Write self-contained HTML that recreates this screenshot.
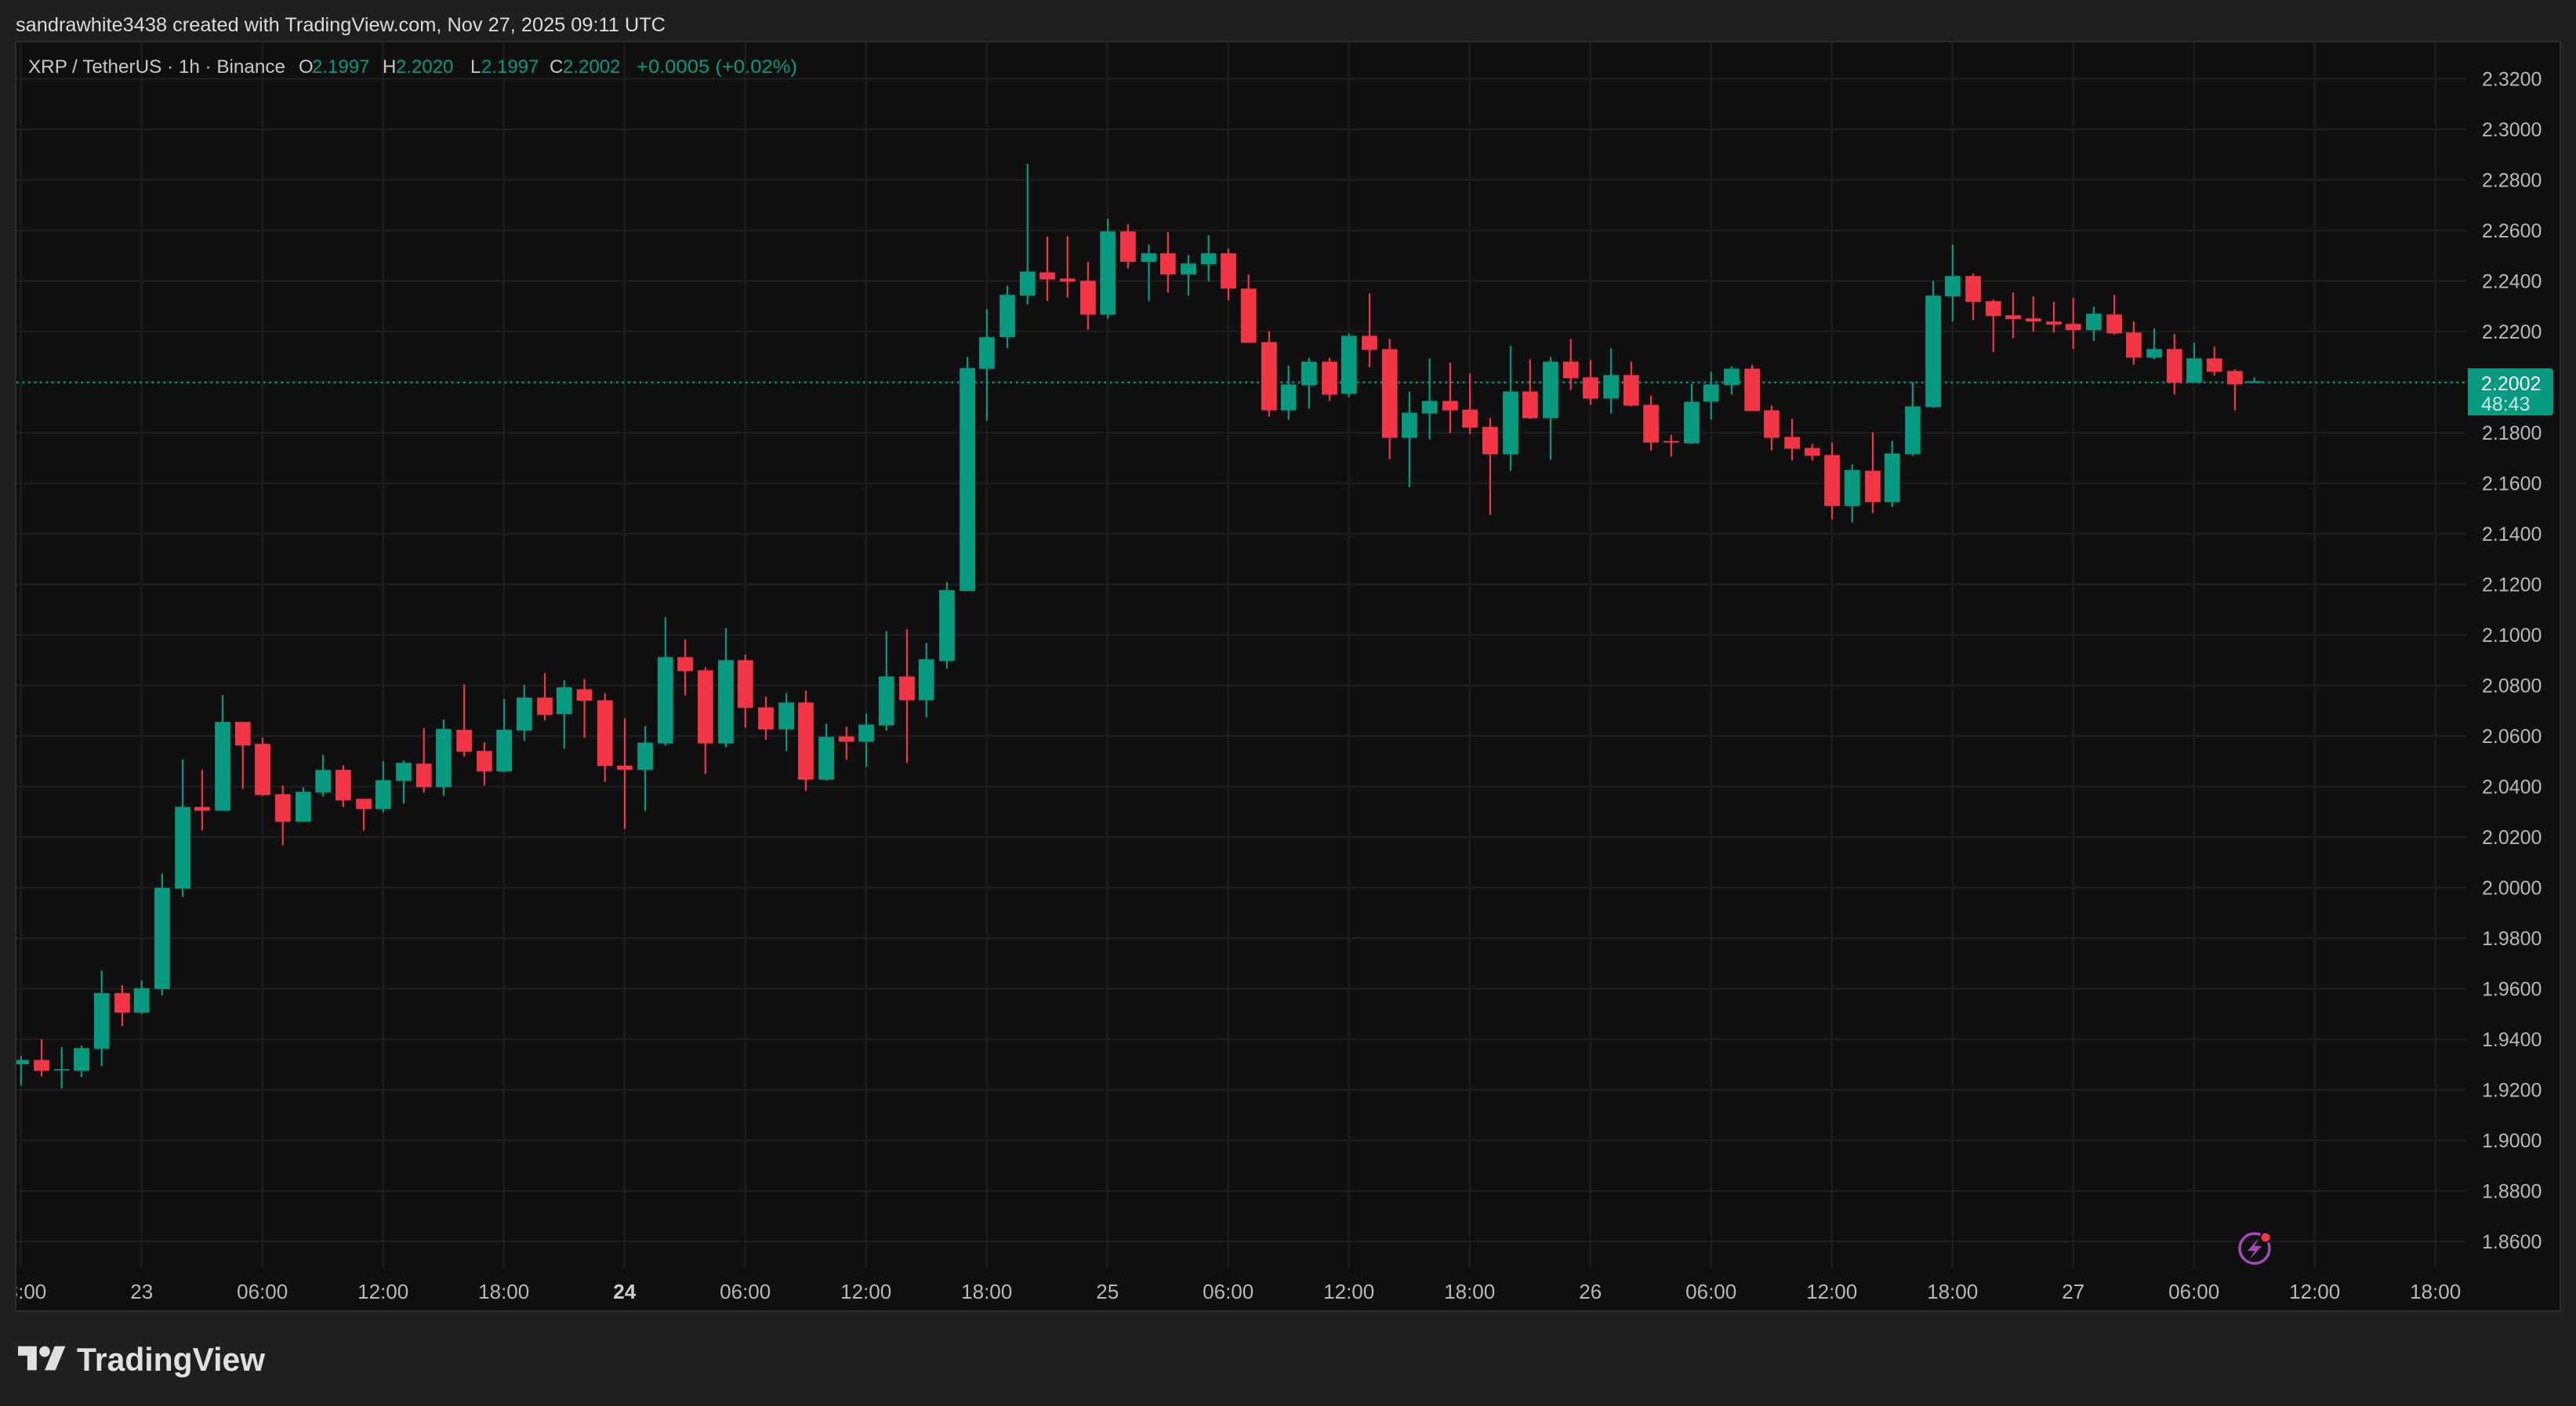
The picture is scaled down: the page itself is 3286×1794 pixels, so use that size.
<!DOCTYPE html>
<html><head><meta charset="utf-8"><style>
html,body{margin:0;padding:0;background:#1f1f1f;}
svg{display:block;}
.g{fill:#089981}.r{fill:#f23645}
text{font-family:"Liberation Sans",sans-serif;}
</style></head><body>
<svg width="3286" height="1794" viewBox="0 0 3286 1794" xmlns="http://www.w3.org/2000/svg">
<defs><clipPath id="pane"><rect x="21" y="54" width="3244" height="1618"/></clipPath></defs>
<rect x="0" y="0" width="3286" height="1794" fill="#1f1f1f"/>
<rect x="20" y="53" width="3246" height="1620" fill="#0f0f0f" stroke="#2c2c2c" stroke-width="2"/>
<g stroke="#1f1f1f" stroke-width="2">
<line x1="21" x2="3146" y1="100.6" y2="100.6"/><line x1="21" x2="3146" y1="165.1" y2="165.1"/><line x1="21" x2="3146" y1="229.6" y2="229.6"/><line x1="21" x2="3146" y1="294.1" y2="294.1"/><line x1="21" x2="3146" y1="358.6" y2="358.6"/><line x1="21" x2="3146" y1="423.1" y2="423.1"/><line x1="21" x2="3146" y1="487.6" y2="487.6"/><line x1="21" x2="3146" y1="552.1" y2="552.1"/><line x1="21" x2="3146" y1="616.6" y2="616.6"/><line x1="21" x2="3146" y1="681.1" y2="681.1"/><line x1="21" x2="3146" y1="745.6" y2="745.6"/><line x1="21" x2="3146" y1="810.1" y2="810.1"/><line x1="21" x2="3146" y1="874.6" y2="874.6"/><line x1="21" x2="3146" y1="939.1" y2="939.1"/><line x1="21" x2="3146" y1="1003.6" y2="1003.6"/><line x1="21" x2="3146" y1="1068.1" y2="1068.1"/><line x1="21" x2="3146" y1="1132.6" y2="1132.6"/><line x1="21" x2="3146" y1="1197.1" y2="1197.1"/><line x1="21" x2="3146" y1="1261.6" y2="1261.6"/><line x1="21" x2="3146" y1="1326.1" y2="1326.1"/><line x1="21" x2="3146" y1="1390.6" y2="1390.6"/><line x1="21" x2="3146" y1="1455.1" y2="1455.1"/><line x1="21" x2="3146" y1="1519.6" y2="1519.6"/><line x1="21" x2="3146" y1="1584.1" y2="1584.1"/>
</g>
<g stroke="#1f1f1f" stroke-width="2">
<line y1="54" y2="1618" x1="26.7" x2="26.7"/><line y1="54" y2="1618" x1="180.7" x2="180.7"/><line y1="54" y2="1618" x1="334.7" x2="334.7"/><line y1="54" y2="1618" x1="488.7" x2="488.7"/><line y1="54" y2="1618" x1="642.7" x2="642.7"/><line y1="54" y2="1618" x1="796.7" x2="796.7"/><line y1="54" y2="1618" x1="950.7" x2="950.7"/><line y1="54" y2="1618" x1="1104.7" x2="1104.7"/><line y1="54" y2="1618" x1="1258.7" x2="1258.7"/><line y1="54" y2="1618" x1="1412.7" x2="1412.7"/><line y1="54" y2="1618" x1="1566.7" x2="1566.7"/><line y1="54" y2="1618" x1="1720.7" x2="1720.7"/><line y1="54" y2="1618" x1="1874.7" x2="1874.7"/><line y1="54" y2="1618" x1="2028.7" x2="2028.7"/><line y1="54" y2="1618" x1="2182.7" x2="2182.7"/><line y1="54" y2="1618" x1="2336.7" x2="2336.7"/><line y1="54" y2="1618" x1="2490.7" x2="2490.7"/><line y1="54" y2="1618" x1="2644.7" x2="2644.7"/><line y1="54" y2="1618" x1="2798.7" x2="2798.7"/><line y1="54" y2="1618" x1="2952.7" x2="2952.7"/><line y1="54" y2="1618" x1="3106.7" x2="3106.7"/>
</g>
<line x1="21" x2="3148" y1="488" y2="488" stroke="#089981" stroke-width="2.5" stroke-dasharray="2.5 5"/>
<g clip-path="url(#pane)">
<g transform="translate(20,858) scale(0.4592,0.3453)">
<rect class="g" x="12.6" y="1417" width="4.8" height="110"/><rect class="g" x="-6.5" y="1432" width="43" height="16"/>
<rect class="r" x="69.6" y="1356" width="4.8" height="137"/><rect class="r" x="50.5" y="1432" width="43" height="40"/>
<rect class="g" x="125.6" y="1385" width="4.8" height="153"/><rect class="g" x="106.5" y="1466" width="43" height="5"/>
<rect class="g" x="180.6" y="1379" width="4.8" height="116"/><rect class="g" x="161.5" y="1388" width="43" height="84"/>
<rect class="g" x="236.6" y="1101" width="4.8" height="354"/><rect class="g" x="217.5" y="1185" width="43" height="206"/>
<rect class="r" x="293.6" y="1156" width="4.8" height="151"/><rect class="r" x="274.5" y="1185" width="43" height="72"/>
<rect class="g" x="347.6" y="1138" width="4.8" height="125"/><rect class="g" x="328.5" y="1167" width="43" height="90"/>
<rect class="g" x="404.6" y="743" width="4.8" height="450"/><rect class="g" x="385.5" y="796" width="43" height="374"/>
<rect class="g" x="461.6" y="322" width="4.8" height="508"/><rect class="g" x="442.5" y="497" width="43" height="302"/>
<rect class="r" x="515.6" y="360" width="4.8" height="224"/><rect class="r" x="496.5" y="497" width="43" height="14"/>
<rect class="g" x="572.6" y="84" width="4.8" height="427"/><rect class="g" x="553.5" y="183" width="43" height="328"/>
<rect class="r" x="628.6" y="183" width="4.8" height="247"/><rect class="r" x="609.5" y="183" width="43" height="87"/>
<rect class="r" x="683.6" y="241" width="4.8" height="215"/><rect class="r" x="664.5" y="264" width="43" height="189"/>
<rect class="r" x="739.6" y="418" width="4.8" height="221"/><rect class="r" x="720.5" y="450" width="43" height="102"/>
<rect class="g" x="796.6" y="424" width="4.8" height="128"/><rect class="g" x="777.5" y="441" width="43" height="111"/>
<rect class="g" x="851.6" y="305" width="4.8" height="154"/><rect class="g" x="832.5" y="360" width="43" height="84"/>
<rect class="r" x="907.6" y="343" width="4.8" height="154"/><rect class="r" x="888.5" y="360" width="43" height="113"/>
<rect class="r" x="964.6" y="467" width="4.8" height="117"/><rect class="r" x="945.5" y="467" width="43" height="38"/>
<rect class="g" x="1018.6" y="328" width="4.8" height="189"/><rect class="g" x="999.5" y="398" width="43" height="107"/>
<rect class="g" x="1075.6" y="325" width="4.8" height="160"/><rect class="g" x="1056.5" y="334" width="43" height="67"/>
<rect class="r" x="1131.6" y="206" width="4.8" height="238"/><rect class="r" x="1112.5" y="337" width="43" height="87"/>
<rect class="g" x="1186.6" y="174" width="4.8" height="282"/><rect class="g" x="1167.5" y="209" width="43" height="215"/>
<rect class="r" x="1243.6" y="44" width="4.8" height="267"/><rect class="r" x="1224.5" y="212" width="43" height="81"/>
<rect class="r" x="1299.6" y="258" width="4.8" height="160"/><rect class="r" x="1280.5" y="290" width="43" height="76"/>
<rect class="g" x="1354.6" y="99" width="4.8" height="270"/><rect class="g" x="1335.5" y="212" width="43" height="154"/>
<rect class="g" x="1410.6" y="46" width="4.8" height="207"/><rect class="g" x="1391.5" y="93" width="43" height="122"/>
<rect class="r" x="1467.6" y="3" width="4.8" height="174"/><rect class="r" x="1448.5" y="93" width="43" height="64"/>
<rect class="g" x="1521.6" y="29" width="4.8" height="253"/><rect class="g" x="1502.5" y="55" width="43" height="99"/>
</g>
<g transform="translate(740,189) scale(0.4592,0.5623)">
<rect class="r" x="9.6" y="1205" width="4.8" height="133"/><rect class="r" x="-9.5" y="1228" width="43" height="26"/>
<rect class="r" x="66.6" y="1237" width="4.8" height="201"/><rect class="r" x="47.5" y="1253" width="43" height="149"/>
<rect class="r" x="121.6" y="1294" width="4.8" height="251"/><rect class="r" x="102.5" y="1401" width="43" height="10"/>
<rect class="g" x="178.6" y="1311" width="4.8" height="193"/><rect class="g" x="159.5" y="1349" width="43" height="62"/>
<rect class="g" x="234.6" y="1064" width="4.8" height="292"/><rect class="g" x="215.5" y="1155" width="43" height="196"/>
<rect class="r" x="289.6" y="1115" width="4.8" height="127"/><rect class="r" x="270.5" y="1155" width="43" height="32"/>
<rect class="r" x="345.6" y="1178" width="4.8" height="242"/><rect class="r" x="326.5" y="1185" width="43" height="166"/>
<rect class="g" x="402.6" y="1089" width="4.8" height="271"/><rect class="g" x="383.5" y="1162" width="43" height="189"/>
<rect class="r" x="456.6" y="1149" width="4.8" height="166"/><rect class="r" x="437.5" y="1162" width="43" height="108"/>
<rect class="r" x="513.6" y="1245" width="4.8" height="98"/><rect class="r" x="494.5" y="1269" width="43" height="50"/>
<rect class="g" x="570.6" y="1237" width="4.8" height="131"/><rect class="g" x="551.5" y="1258" width="43" height="61"/>
<rect class="r" x="624.6" y="1231" width="4.8" height="228"/><rect class="r" x="605.5" y="1258" width="43" height="175"/>
<rect class="g" x="681.6" y="1306" width="4.8" height="129"/><rect class="g" x="662.5" y="1336" width="43" height="97"/>
<rect class="r" x="737.6" y="1313" width="4.8" height="75"/><rect class="r" x="718.5" y="1335" width="43" height="12"/>
<rect class="g" x="792.6" y="1283" width="4.8" height="121"/><rect class="g" x="773.5" y="1308" width="43" height="39"/>
<rect class="g" x="848.6" y="1096" width="4.8" height="226"/><rect class="g" x="829.5" y="1199" width="43" height="111"/>
<rect class="r" x="905.6" y="1092" width="4.8" height="303"/><rect class="r" x="886.5" y="1199" width="43" height="54"/>
<rect class="g" x="959.6" y="1123" width="4.8" height="169"/><rect class="g" x="940.5" y="1160" width="43" height="93"/>
<rect class="g" x="1016.6" y="985" width="4.8" height="196"/><rect class="g" x="997.5" y="1003" width="43" height="161"/>
<rect class="g" x="1073.6" y="474" width="4.8" height="531"/><rect class="g" x="1054.5" y="499" width="43" height="506"/>
<rect class="g" x="1127.6" y="365" width="4.8" height="253"/><rect class="g" x="1108.5" y="429" width="43" height="72"/>
<rect class="g" x="1184.6" y="312" width="4.8" height="142"/><rect class="g" x="1165.5" y="333" width="43" height="96"/>
<rect class="g" x="1240.6" y="36" width="4.8" height="319"/><rect class="g" x="1221.5" y="280" width="43" height="55"/>
<rect class="r" x="1295.6" y="201" width="4.8" height="146"/><rect class="r" x="1276.5" y="282" width="43" height="16"/>
<rect class="r" x="1351.6" y="200" width="4.8" height="139"/><rect class="r" x="1332.5" y="296" width="43" height="7"/>
<rect class="r" x="1408.6" y="258" width="4.8" height="154"/><rect class="r" x="1389.5" y="301" width="43" height="77"/>
<rect class="g" x="1463.6" y="160" width="4.8" height="227"/><rect class="g" x="1444.5" y="189" width="43" height="189"/>
<rect class="r" x="1519.6" y="173" width="4.8" height="100"/><rect class="r" x="1500.5" y="189" width="43" height="69"/>
</g>
<g transform="translate(1460,219) scale(0.4592,0.334)">
<rect class="g" x="9.6" y="279" width="4.8" height="216"/><rect class="g" x="-9.5" y="312" width="43" height="33"/>
<rect class="r" x="62.6" y="231" width="4.8" height="231"/><rect class="r" x="43.5" y="312" width="43" height="81"/>
<rect class="g" x="119.6" y="318" width="4.8" height="156"/><rect class="g" x="100.5" y="351" width="43" height="42"/>
<rect class="g" x="175.6" y="243" width="4.8" height="177"/><rect class="g" x="156.5" y="312" width="43" height="42"/>
<rect class="r" x="230.6" y="294" width="4.8" height="198"/><rect class="r" x="211.5" y="312" width="43" height="135"/>
<rect class="r" x="286.6" y="393" width="4.8" height="261"/><rect class="r" x="267.5" y="447" width="43" height="207"/>
<rect class="r" x="343.6" y="609" width="4.8" height="327"/><rect class="r" x="324.5" y="651" width="43" height="261"/>
<rect class="g" x="397.6" y="741" width="4.8" height="207"/><rect class="g" x="378.5" y="813" width="43" height="99"/>
<rect class="g" x="454.6" y="711" width="4.8" height="195"/><rect class="g" x="435.5" y="726" width="43" height="90"/>
<rect class="r" x="511.6" y="711" width="4.8" height="165"/><rect class="r" x="492.5" y="726" width="43" height="126"/>
<rect class="g" x="565.6" y="618" width="4.8" height="243"/><rect class="g" x="546.5" y="627" width="43" height="222"/>
<rect class="r" x="622.6" y="465" width="4.8" height="282"/><rect class="r" x="603.5" y="627" width="43" height="54"/>
<rect class="r" x="678.6" y="639" width="4.8" height="459"/><rect class="r" x="659.5" y="678" width="43" height="339"/>
<rect class="g" x="733.6" y="840" width="4.8" height="366"/><rect class="g" x="714.5" y="921" width="43" height="96"/>
<rect class="g" x="789.6" y="714" width="4.8" height="309"/><rect class="g" x="770.5" y="876" width="43" height="48"/>
<rect class="r" x="846.6" y="729" width="4.8" height="270"/><rect class="r" x="827.5" y="876" width="43" height="36"/>
<rect class="r" x="901.6" y="771" width="4.8" height="231"/><rect class="r" x="882.5" y="909" width="43" height="69"/>
<rect class="r" x="957.6" y="942" width="4.8" height="369"/><rect class="r" x="938.5" y="975" width="43" height="105"/>
<rect class="g" x="1014.6" y="666" width="4.8" height="477"/><rect class="g" x="995.5" y="840" width="43" height="240"/>
<rect class="r" x="1068.6" y="717" width="4.8" height="228"/><rect class="r" x="1049.5" y="840" width="43" height="102"/>
<rect class="g" x="1125.6" y="708" width="4.8" height="393"/><rect class="g" x="1106.5" y="726" width="43" height="216"/>
<rect class="r" x="1181.6" y="639" width="4.8" height="195"/><rect class="r" x="1162.5" y="726" width="43" height="63"/>
<rect class="r" x="1236.6" y="720" width="4.8" height="171"/><rect class="r" x="1217.5" y="786" width="43" height="81"/>
<rect class="g" x="1293.6" y="675" width="4.8" height="249"/><rect class="g" x="1274.5" y="777" width="43" height="90"/>
<rect class="r" x="1349.6" y="726" width="4.8" height="171"/><rect class="r" x="1330.5" y="777" width="43" height="117"/>
<rect class="r" x="1404.6" y="855" width="4.8" height="210"/><rect class="r" x="1385.5" y="891" width="43" height="144"/>
<rect class="r" x="1460.6" y="1005" width="4.8" height="84"/><rect class="r" x="1441.5" y="1029" width="43" height="6"/>
<rect class="g" x="1517.6" y="810" width="4.8" height="231"/><rect class="g" x="1498.5" y="879" width="43" height="159"/>
</g>
<g transform="translate(2180,278) scale(0.4592,0.334)">
<rect class="g" x="3.6" y="588" width="4.8" height="183"/><rect class="g" x="-15.5" y="636" width="43" height="66"/>
<rect class="g" x="60.6" y="567" width="4.8" height="108"/><rect class="g" x="41.5" y="576" width="43" height="63"/>
<rect class="r" x="117.6" y="561" width="4.8" height="177"/><rect class="r" x="98.5" y="576" width="43" height="162"/>
<rect class="r" x="171.6" y="717" width="4.8" height="171"/><rect class="r" x="152.5" y="735" width="43" height="105"/>
<rect class="r" x="228.6" y="768" width="4.8" height="159"/><rect class="r" x="209.5" y="837" width="43" height="45"/>
<rect class="r" x="284.6" y="864" width="4.8" height="63"/><rect class="r" x="265.5" y="879" width="43" height="30"/>
<rect class="r" x="339.6" y="858" width="4.8" height="294"/><rect class="r" x="320.5" y="906" width="43" height="195"/>
<rect class="g" x="395.6" y="942" width="4.8" height="222"/><rect class="g" x="376.5" y="963" width="43" height="138"/>
<rect class="r" x="452.6" y="819" width="4.8" height="309"/><rect class="r" x="433.5" y="966" width="43" height="120"/>
<rect class="g" x="506.6" y="852" width="4.8" height="252"/><rect class="g" x="487.5" y="900" width="43" height="186"/>
<rect class="g" x="563.6" y="627" width="4.8" height="282"/><rect class="g" x="544.5" y="720" width="43" height="183"/>
<rect class="g" x="620.6" y="240" width="4.8" height="486"/><rect class="g" x="601.5" y="297" width="43" height="426"/>
<rect class="g" x="674.6" y="102" width="4.8" height="294"/><rect class="g" x="655.5" y="222" width="43" height="78"/>
<rect class="r" x="731.6" y="213" width="4.8" height="177"/><rect class="r" x="712.5" y="222" width="43" height="99"/>
<rect class="r" x="787.6" y="312" width="4.8" height="201"/><rect class="r" x="768.5" y="318" width="43" height="57"/>
<rect class="r" x="842.6" y="285" width="4.8" height="174"/><rect class="r" x="823.5" y="372" width="43" height="15"/>
<rect class="r" x="898.6" y="300" width="4.8" height="135"/><rect class="r" x="879.5" y="384" width="43" height="12"/>
<rect class="r" x="955.6" y="321" width="4.8" height="117"/><rect class="r" x="936.5" y="396" width="43" height="12"/>
<rect class="r" x="1009.6" y="306" width="4.8" height="195"/><rect class="r" x="990.5" y="405" width="43" height="24"/>
<rect class="g" x="1066.6" y="339" width="4.8" height="132"/><rect class="g" x="1047.5" y="366" width="43" height="63"/>
<rect class="r" x="1123.6" y="294" width="4.8" height="153"/><rect class="r" x="1104.5" y="369" width="43" height="72"/>
<rect class="r" x="1177.6" y="396" width="4.8" height="165"/><rect class="r" x="1158.5" y="438" width="43" height="96"/>
<rect class="g" x="1234.6" y="423" width="4.8" height="117"/><rect class="g" x="1215.5" y="501" width="43" height="33"/>
<rect class="r" x="1290.6" y="444" width="4.8" height="231"/><rect class="r" x="1271.5" y="501" width="43" height="129"/>
<rect class="g" x="1345.6" y="477" width="4.8" height="153"/><rect class="g" x="1326.5" y="537" width="43" height="93"/>
<rect class="r" x="1401.6" y="492" width="4.8" height="111"/><rect class="r" x="1382.5" y="537" width="43" height="51"/>
<rect class="r" x="1458.6" y="579" width="4.8" height="156"/><rect class="r" x="1439.5" y="585" width="43" height="51"/>
<rect class="g" x="1512.6" y="609" width="4.8" height="21"/><rect class="g" x="1493.5" y="624" width="43" height="6"/>
</g>
<g font-size="26" fill="#b8b8b8" text-anchor="middle">
<text x="26.7" y="1657">18:00</text><text x="180.7" y="1657">23</text><text x="334.7" y="1657">06:00</text><text x="488.7" y="1657">12:00</text><text x="642.7" y="1657">18:00</text><text x="796.7" y="1657" font-weight="bold" fill="#cfcfcf">24</text><text x="950.7" y="1657">06:00</text><text x="1104.7" y="1657">12:00</text><text x="1258.7" y="1657">18:00</text><text x="1412.7" y="1657">25</text><text x="1566.7" y="1657">06:00</text><text x="1720.7" y="1657">12:00</text><text x="1874.7" y="1657">18:00</text><text x="2028.7" y="1657">26</text><text x="2182.7" y="1657">06:00</text><text x="2336.7" y="1657">12:00</text><text x="2490.7" y="1657">18:00</text><text x="2644.7" y="1657">27</text><text x="2798.7" y="1657">06:00</text><text x="2952.7" y="1657">12:00</text><text x="3106.7" y="1657">18:00</text>
</g>
<g>
<circle cx="2876" cy="1593" r="19" fill="none" stroke="#ab47bc" stroke-width="3.5"/>
<path d="M2881 1580 L2867 1596 L2876 1596 L2870 1607 L2885 1590 L2876 1590 Z" fill="#ab47bc"/>
<circle cx="2890" cy="1579" r="6.5" fill="#f23645" stroke="#0f0f0f" stroke-width="2"/>
</g>
</g>
<g font-size="25" fill="#b8b8b8">
<text x="3166" y="109.6">2.3200</text><text x="3166" y="174.1">2.3000</text><text x="3166" y="238.6">2.2800</text><text x="3166" y="303.1">2.2600</text><text x="3166" y="367.6">2.2400</text><text x="3166" y="432.1">2.2200</text><text x="3166" y="561.1">2.1800</text><text x="3166" y="625.6">2.1600</text><text x="3166" y="690.1">2.1400</text><text x="3166" y="754.6">2.1200</text><text x="3166" y="819.1">2.1000</text><text x="3166" y="883.6">2.0800</text><text x="3166" y="948.1">2.0600</text><text x="3166" y="1012.6">2.0400</text><text x="3166" y="1077.1">2.0200</text><text x="3166" y="1141.6">2.0000</text><text x="3166" y="1206.1">1.9800</text><text x="3166" y="1270.6">1.9600</text><text x="3166" y="1335.1">1.9400</text><text x="3166" y="1399.6">1.9200</text><text x="3166" y="1464.1">1.9000</text><text x="3166" y="1528.6">1.8800</text><text x="3166" y="1593.1">1.8600</text>
</g>
<path d="M3148 470 H3253 a4 4 0 0 1 4 4 V526 a4 4 0 0 1 -4 4 H3148 Z" fill="#089981"/>
<text x="3165" y="498" font-size="25" fill="#ffffff">2.2002</text>
<text x="3165" y="524" font-size="25" fill="#c9ece5">48:43</text>
<text x="20" y="40" font-size="25" fill="#dbdbdb" textLength="829" lengthAdjust="spacingAndGlyphs">sandrawhite3438 created with TradingView.com, Nov 27, 2025 09:11 UTC</text>
<g font-size="24">
<text x="36" y="93" fill="#c8c8c8" textLength="328" lengthAdjust="spacingAndGlyphs">XRP / TetherUS · 1h · Binance</text>
<text x="381" y="93" fill="#c8c8c8">O</text><text x="398" y="93" fill="#089981">2.1997</text>
<text x="488" y="93" fill="#c8c8c8">H</text><text x="505" y="93" fill="#089981">2.2020</text>
<text x="600" y="93" fill="#c8c8c8">L</text><text x="614" y="93" fill="#089981">2.1997</text>
<text x="701" y="93" fill="#c8c8c8">C</text><text x="718" y="93" fill="#089981">2.2002</text>
<text x="812" y="93" fill="#089981" textLength="205" lengthAdjust="spacingAndGlyphs">+0.0005 (+0.02%)</text>
</g>
<g transform="translate(23,1711) scale(1.7)" fill="#e0e0e0">
<path d="M14 22H7V11H0V4h14v18z"/><circle cx="20" cy="8" r="4"/><path d="M28 22h-8l7.5-18h8L28 22z"/>
</g>
<text x="98" y="1749" font-size="42" font-weight="bold" fill="#e0e0e0" textLength="240" lengthAdjust="spacingAndGlyphs">TradingView</text>
</svg>
</body></html>
